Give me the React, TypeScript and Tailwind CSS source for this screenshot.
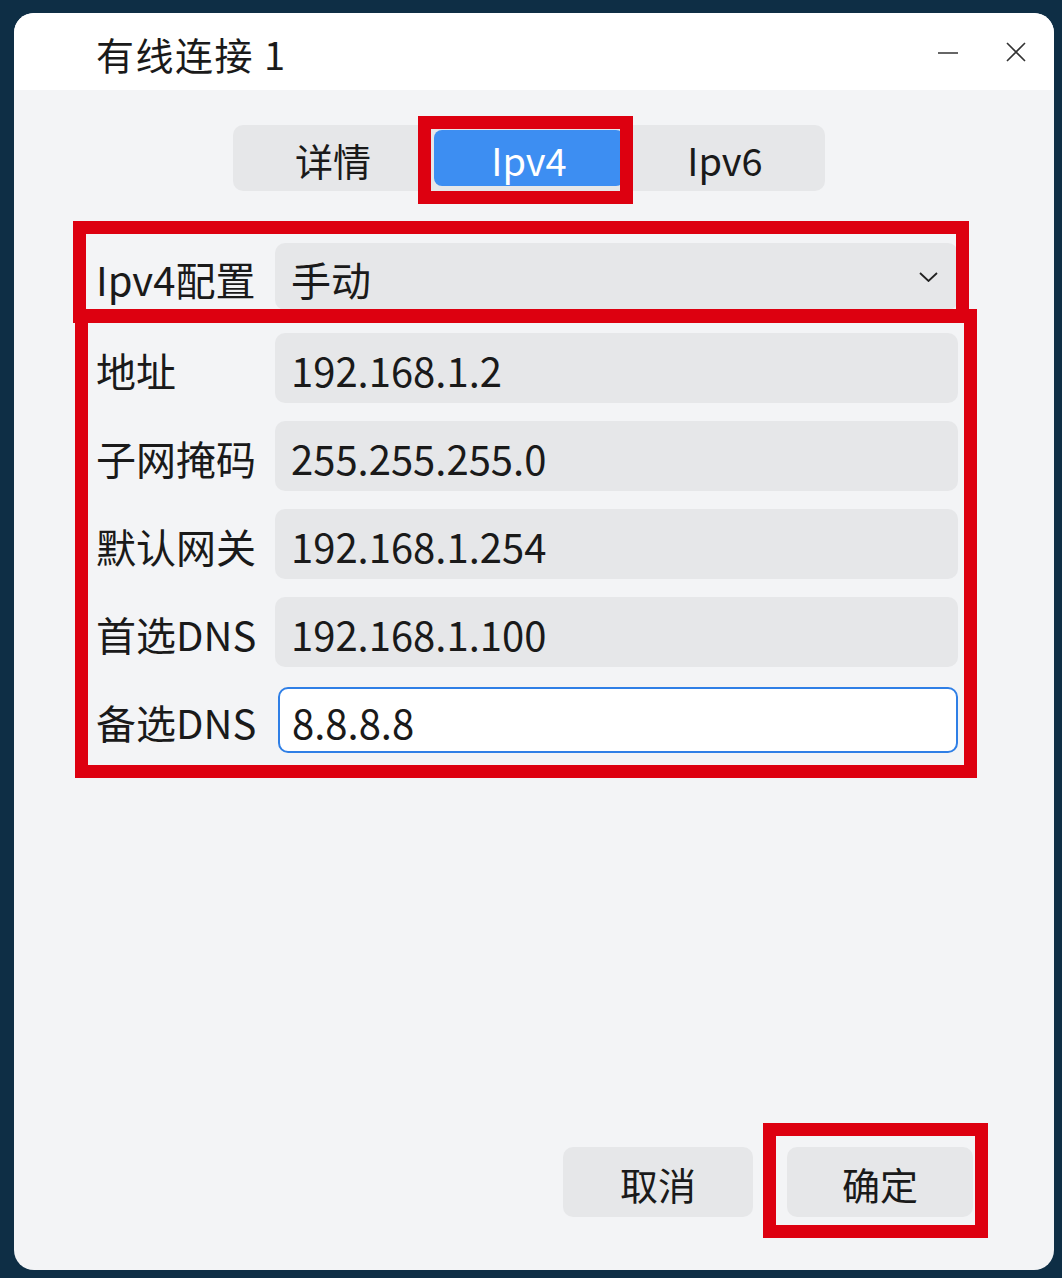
import React from 'react';

const rows = [
  { label: '地址', value: '192.168.1.2' },
  { label: '子网掩码', value: '255.255.255.0' },
  { label: '默认网关', value: '192.168.1.254' },
  { label: '首选DNS', value: '192.168.1.100' },
];

const tabs = ['详情', 'Ipv4', 'Ipv6'];

// red annotation boxes drawn over the screenshot
const marks = [
  'left-[418px] top-[116px] w-[215px] h-[88px]',
  'left-[73px] top-[221px] w-[896px] h-[102px]',
  'left-[75px] top-[309px] w-[902px] h-[469px]',
  'left-[763px] top-[1123px] w-[225px] h-[115px]',
];

export default function App() {
  return (
    <div
      className="relative w-[1062px] h-[1278px] overflow-hidden bg-[#0e2e45] pt-[13px] pl-[14px]"
      style={{ fontFamily: '"Noto Sans CJK SC", "Noto Sans", sans-serif' }}
    >
      <div className="flex h-[1257px] w-[1040px] flex-col overflow-hidden rounded-[20px] bg-[#f3f4f6] text-[#1a1a1a]">
        <header className="flex h-[77px] shrink-0 items-center bg-white pl-[82px] pr-[28px]">
          <span className="mt-[4px] text-[38px] leading-none tracking-[1.5px]">有线连接 1</span>
          <div className="ml-auto flex items-center gap-[48px]">
            <svg width="20" height="20" viewBox="0 0 20 20">
              <path d="M0 11h20" stroke="#333" strokeWidth="1.6" />
            </svg>
            <svg width="20" height="20" viewBox="0 0 20 20">
              <path d="M1 1l18 18M19 1L1 19" stroke="#333" strokeWidth="1.6" />
            </svg>
          </div>
        </header>

        <div className="flex flex-1 flex-col">
          <div className="ml-[219px] mt-[35px] flex w-[592px] gap-[6px] rounded-[10px] bg-[#e6e7e9] p-[5px]">
            {tabs.map((t) => (
              <div
                key={t}
                className={`flex h-[56px] w-[190px] items-center justify-center rounded-[8px] pt-[4px] text-[38px] leading-none ${
                  t === 'Ipv4' ? 'bg-[#3d8ef2] text-white' : 'text-[#1a1a1a]'
                }`}
              >
                {t}
              </div>
            ))}
          </div>

          <div className="mt-[52px] flex flex-col pl-[82px] pr-[96px]">
            <div className="flex h-[67px] items-center">
              <span className="w-[179px] shrink-0 pt-[4px] text-[40px] leading-none">Ipv4配置</span>
              <div className="flex h-full flex-1 items-center rounded-[10px] bg-[#e6e7e9] pl-[16px] pr-[20px]">
                <span className="pt-[4px] text-[40px] leading-none">手动</span>
                <svg className="ml-auto" width="19" height="10" viewBox="0 0 19 10">
                  <path d="M1 1l8.5 8L18 1" fill="none" stroke="#222" strokeWidth="1.8" />
                </svg>
              </div>
            </div>

            <div className="mt-[23px] flex flex-col gap-[18px]">
              {rows.map((r) => (
                <div key={r.label} className="flex h-[70px] items-center">
                  <span className="w-[179px] shrink-0 pt-[4px] text-[40px] leading-none">{r.label}</span>
                  <div className="flex h-full flex-1 items-center rounded-[10px] bg-[#e6e7e9] pl-[16px]">
                    <span className="pt-[4px] text-[40px] leading-none">{r.value}</span>
                  </div>
                </div>
              ))}
            </div>

            <div className="mt-[20px] flex h-[66px] items-center">
              <span className="w-[179px] shrink-0 pt-[4px] text-[40px] leading-none">备选DNS</span>
              <div className="ml-[3px] flex h-[66px] flex-1 items-center rounded-[10px] border-2 border-[#2f7fe6] bg-white pl-[12px]">
                <span className="pt-[4px] text-[40px] leading-none">8.8.8.8</span>
              </div>
            </div>
          </div>

          <div className="mt-auto flex justify-end gap-[34px] pb-[53px] pr-[81px]">
            <button className="flex h-[70px] w-[190px] items-center justify-center rounded-[10px] bg-[#e6e7e9] pt-[4px] text-[38px] leading-none">
              取消
            </button>
            <button className="flex h-[70px] w-[186px] items-center justify-center rounded-[10px] bg-[#e6e7e9] pt-[4px] text-[38px] leading-none">
              确定
            </button>
          </div>
        </div>
      </div>

      {marks.map((m) => (
        <div key={m} className={`pointer-events-none absolute border-[13px] border-[#dd0010] ${m}`} />
      ))}
    </div>
  );
}
